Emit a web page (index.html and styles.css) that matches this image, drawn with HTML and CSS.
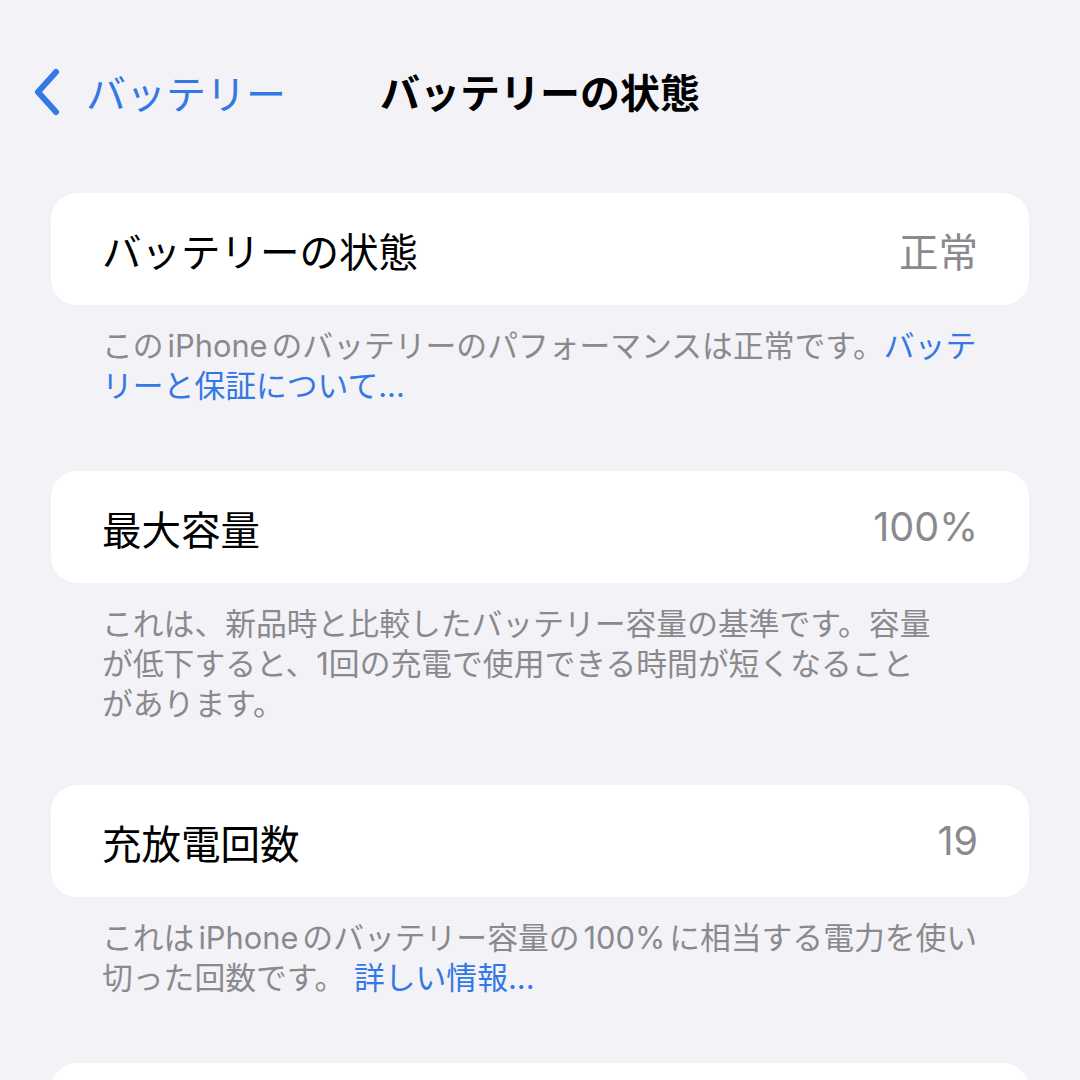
FILE: index.html
```html
<!DOCTYPE html>
<html lang="ja">
<head>
  <meta charset="UTF-8">
  <meta name="viewport" content="width=device-width, initial-scale=1.0">
  <title>バッテリーの状態</title>
  <link rel="stylesheet" href="styles.css">
</head>
<body>

  <div class="navbar">
    <a class="back" href="#">
      <svg class="chevron" width="30" height="48" viewBox="0 0 30 48">
        <path d="M24 4 L6 24 L24 44" fill="none" stroke="currentColor" stroke-width="6" stroke-linecap="round" stroke-linejoin="round"/>
      </svg>
      <span>バッテリー</span>
    </a>
    <div class="title">バッテリーの状態</div>
  </div>

  <div class="section">
    <div class="card">
      <span class="label">バッテリーの状態</span>
      <span class="value">正常</span>
    </div>
    <p class="note">この<span class="latin">iPhone</span>のバッテリーのパフォーマンスは正常です。<a href="#">バッテ<br>リーと保証について...</a></p>
  </div>

  <div class="section">
    <div class="card">
      <span class="label">最大容量</span>
      <span class="value">100%</span>
    </div>
    <p class="note tall">これは、新品時と比較したバッテリー容量の基準です。容量<br>が低下すると、1回の充電で使用できる時間が短くなること<br>があります。</p>
  </div>

  <div class="section">
    <div class="card">
      <span class="label">充放電回数</span>
      <span class="value">19</span>
    </div>
    <p class="note">これは<span class="latin">iPhone</span>のバッテリー容量の<span class="latin">100%</span>に相当する電力を使い<br>切った回数です。 <a href="#">詳しい情報...</a></p>
  </div>

  <div class="section">
    <div class="card"></div>
  </div>

</body>
</html>
```

FILE: styles.css
```css
body {
  margin: 0;
  background-color: #f2f2f7;
  font-family: Inter, "Noto Sans CJK JP", sans-serif;
  color: #000;
  height: 1080px;
  overflow: hidden;
}

a {
  color: #3478e5;
  text-decoration: none;
}

.navbar {
  position: relative;
  height: 100px;
  margin-top: 42px;
  display: flex;
  align-items: center;
  justify-content: center;
}

.back {
  position: absolute;
  left: 32px;
  top: 50%;
  transform: translateY(-50%);
  display: flex;
  align-items: center;
  gap: 24px;
  font-size: 40px;
  color: #3478e5;
}

.chevron {
  display: block;
}

.title {
  font-size: 40px;
  font-weight: 700;
  margin-top: -2px;
}

.section {
  padding: 0 51px;
  margin-top: 51px;
}

.section + .section {
  margin-top: 65px;
}

.card {
  background: #fff;
  border-radius: 26px;
  height: 112px;
  padding: 0 51px;
  display: flex;
  align-items: center;
  justify-content: space-between;
}

.label {
  font-size: 39.5px;
}

.value {
  font-size: 39.5px;
  color: #8a8a8e;
}

.note {
  margin: 21px 0 0;
  padding: 0 51px;
  font-size: 30.8px;
  line-height: 40px;
  color: #8a8a8e;
  white-space: nowrap;
}

.note.tall {
  margin-bottom: -4px;
}

.latin {
  margin: 0 4px;
}
```
